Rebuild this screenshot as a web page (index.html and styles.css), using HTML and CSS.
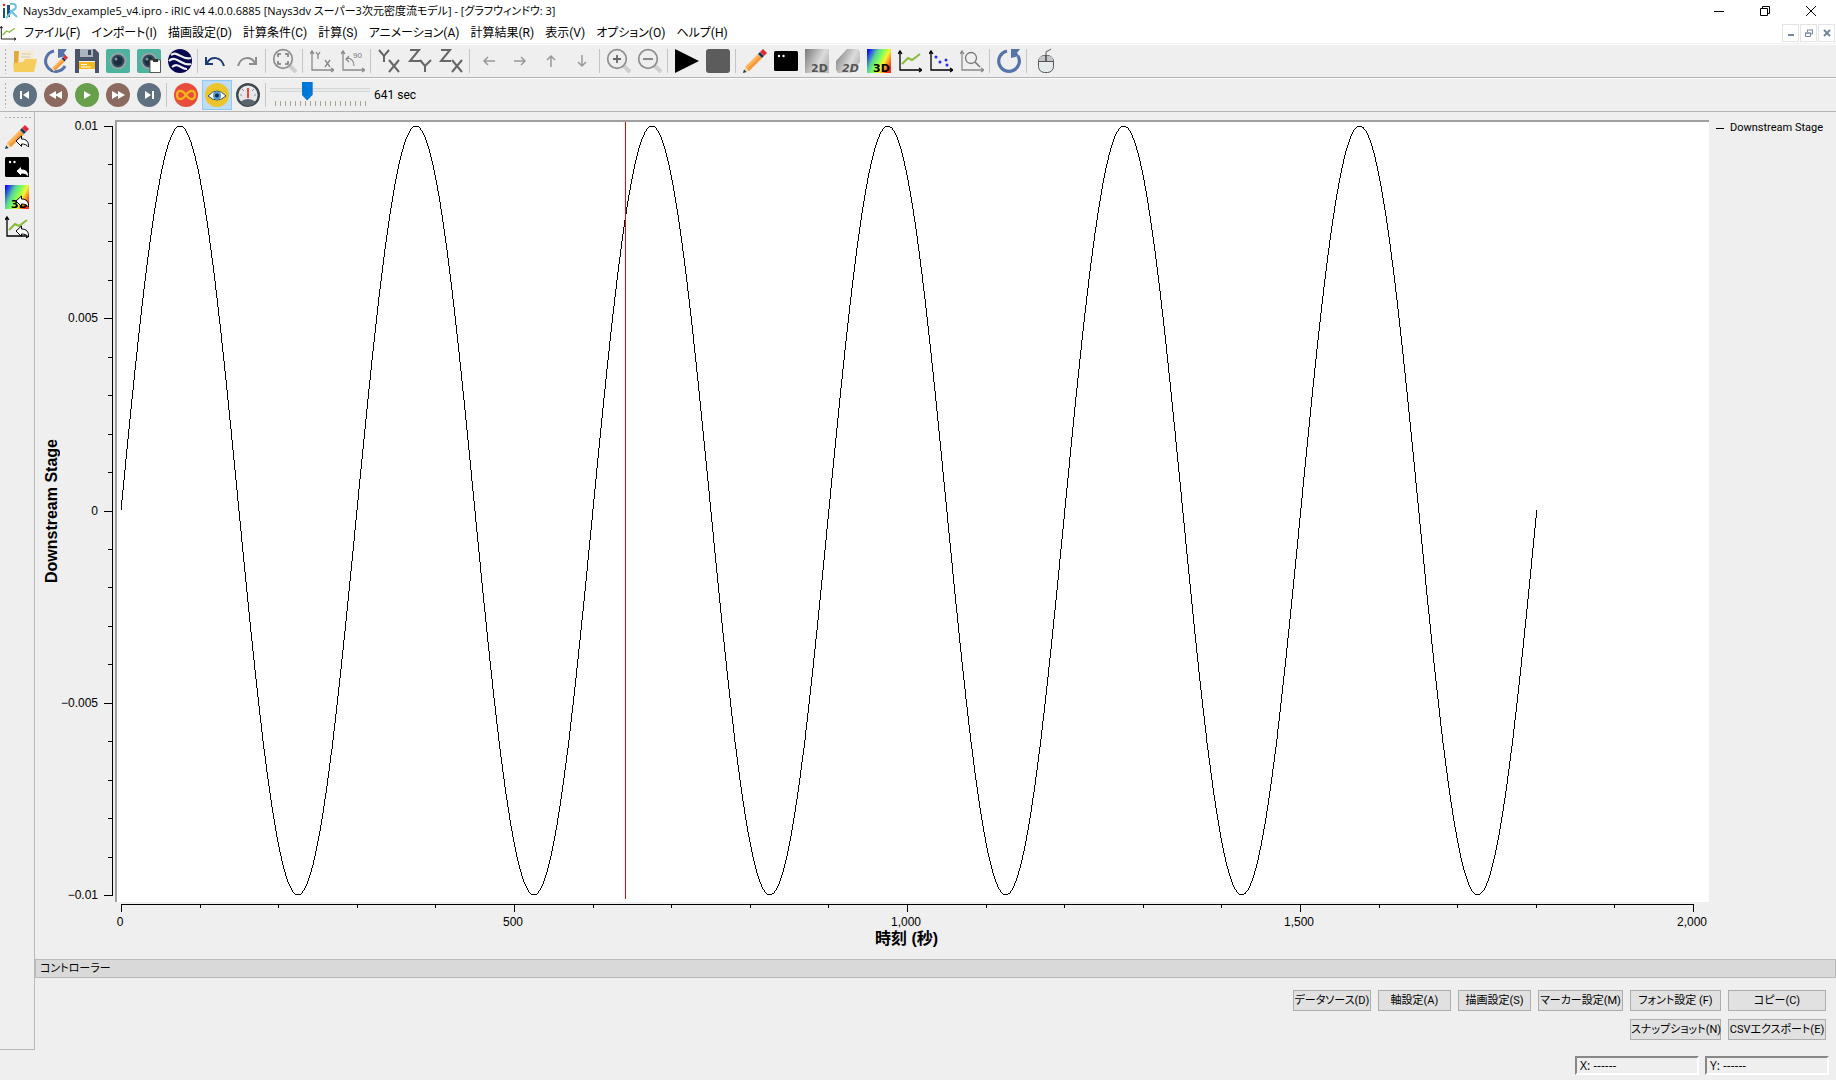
FILE: index.html
```html
<!DOCTYPE html>
<html lang="ja">
<head>
    <meta charset="UTF-8">
    <meta name="viewport" content="width=device-width, initial-scale=1.0">
    <title>Nays3dv_example5_v4.ipro - iRIC v4</title>
    <link rel="stylesheet" href="styles.css">
</head>
<body>
    <!-- shared icon shapes -->
    <svg class="icon-defs" aria-hidden="true">
        <defs>
            <linearGradient id="rainbow" x1="0" y1="0.2" x2="1" y2="0.7">
                <stop offset="0" stop-color="#1414ff"/>
                <stop offset="0.3" stop-color="#5ad29a"/>
                <stop offset="0.5" stop-color="#7dff5a"/>
                <stop offset="0.7" stop-color="#f5f532"/>
                <stop offset="1" stop-color="#ff2a14"/>
            </linearGradient>
            <linearGradient id="grays" x1="0" y1="0" x2="1" y2="0.5">
                <stop offset="0" stop-color="#777"/>
                <stop offset="0.7" stop-color="#dcdcdc"/>
                <stop offset="1" stop-color="#bbb"/>
            </linearGradient>
            <symbol id="pencil" viewBox="0 0 24 24">
                <path d="M0 24L2 18L6 22Z" fill="#f7d9a8"/>
                <path d="M0 24L1 20.500L3.500 23Z" fill="#17375e"/>
                <path d="M2 18L15 5L19 9L6 22Z" fill="#ffb55a"/>
                <path d="M4 20L17 7L19 9L6 22Z" fill="#f59a3c"/>
                <path d="M15 5L17 3L21 7L19 9Z" fill="#17375e"/>
                <path d="M17 3L20 0L24 4L21 7Z" fill="#e02b35"/>
            </symbol>
            <symbol id="terminal" viewBox="0 0 24 24">
                <rect y="2" width="24" height="20" rx="1.500"/>
                <circle cx="5" cy="7" r="1.200" fill="#fff"/>
                <circle cx="9.500" cy="7" r="1.200" fill="#fff"/>
            </symbol>
            <symbol id="axes" viewBox="0 0 24 24">
                <path d="M2 3V21H23M0 5L2 2L4 5M21 19L24 21L21 23" fill="none" stroke="currentColor" stroke-width="1.300"/>
            </symbol>
            <symbol id="line-graph" viewBox="0 0 24 24">
                <use href="#axes"/>
                <path d="M4 15L10 9L14 11L22 5" fill="none" stroke="#86bb3c" stroke-width="2"/>
            </symbol>
            <symbol id="back" viewBox="0 0 24 24">
                <path d="M11 16L16.500 11V14C21.500 14 24 17 23.500 22C21.500 19.500 19.500 19 16.500 19V21.500Z" fill="#fff" stroke="#000"/>
            </symbol>
            <symbol id="camera" viewBox="0 0 24 24">
                <rect width="24" height="24" rx="2" fill="#4db39e"/>
                <circle cx="12" cy="12" r="8.500" fill="#95a5a5"/>
                <circle cx="12" cy="12" r="6.500" fill="#324a5e"/>
                <circle cx="12" cy="12" r="4.500" fill="#1d2c3b"/>
                <circle cx="10" cy="10" r="1.500" fill="#7f93a0"/>
            </symbol>
        </defs>
    </svg>

    <header class="title-bar">
        <svg class="app-logo" viewBox="0 0 16 16"><circle cx="2" cy="2" r="1.300" fill="#c8342c"/><path d="M1 5H3V15H1ZM5 2H8V14H5Z" fill="#1d4f7c"/><path d="M8 1C15-1 16 6 9 8L15 14M4 15C8 12 8 8 14 5" fill="none" stroke="#6dc5dc" stroke-width="2"/></svg>
        <h1 class="title-text">Nays3dv_example5_v4.ipro - iRIC v4 4.0.0.6885 [Nays3dv スーパー3次元密度流モデル] - [グラフウィンドウ: 3]</h1>
        <div class="window-buttons">
            <button type="button" aria-label="最小化"><svg viewBox="0 0 10 10"><path d="M0 5.500H10"/></svg></button>
            <button type="button" aria-label="元に戻す"><svg viewBox="0 0 10 10"><path d="M0.500 2.500H7.500V9.500H0.500ZM2.500 2.500V0.500H9.500V7.500H7.500"/></svg></button>
            <button type="button" aria-label="閉じる"><svg viewBox="0 0 10 10"><path d="M0 0L10 10M10 0L0 10"/></svg></button>
        </div>
    </header>

    <nav class="menu-bar">
        <svg class="menu-icon" viewBox="0 0 24 24"><use href="#line-graph"/></svg>
        <a href="#">ファイル(F)</a>
        <a href="#">インポート(I)</a>
        <a href="#">描画設定(D)</a>
        <a href="#">計算条件(C)</a>
        <a href="#">計算(S)</a>
        <a href="#">アニメーション(A)</a>
        <a href="#">計算結果(R)</a>
        <a href="#">表示(V)</a>
        <a href="#">オプション(O)</a>
        <a href="#">ヘルプ(H)</a>
        <div class="child-buttons">
            <button type="button" aria-label="子ウィンドウを最小化"><svg viewBox="0 0 8 8"><path d="M1 6H7"/></svg></button>
            <button type="button" aria-label="子ウィンドウを元に戻す"><svg viewBox="0 0 8 8"><path d="M2 1H8M7.500 1V5H6M2.500 1V3" stroke-width="1"/><path d="M0.500 4H5.500V7.500H0.500Z" stroke-width="1"/><path d="M0 4H6" stroke-width="1"/></svg></button>
            <button type="button" aria-label="子ウィンドウを閉じる"><svg viewBox="0 0 8 8"><path d="M1 1L7 7M7 1L1 7"/></svg></button>
        </div>
    </nav>

    <div class="toolbar" role="toolbar" aria-label="メイン">
        <span class="grip"></span>
        <button type="button" aria-label="開く"><svg viewBox="0 0 24 24"><path d="M1 2H7L9 5H20V22H1Z" fill="#dfa83a"/><path d="M6 1H21V18H5Z" fill="#f4ecd8"/><path d="M9 5H18M8 8H17" stroke="#d5c9ab"/><path d="M0 14L10 13L12 10H24L21 23H1Z" fill="#f5cd5b"/></svg></button>
        <button type="button" aria-label="再読み込み"><svg viewBox="0 0 24 24"><path d="M10 2A10.300 10.300 0 1 0 21 17" fill="none" stroke="#5573a8" stroke-width="3"/><path d="M14 0H23L20 4L22 7L14 9Z" fill="#5573a8"/><use href="#pencil" x="7" y="6" width="17" height="17"/></svg></button>
        <button type="button" aria-label="保存"><svg viewBox="0 0 24 24"><path d="M0 0H20L24 4V24H0Z" fill="#4a5568"/><path d="M5 0H18V8H5Z" fill="#aab4c0"/><path d="M13 1H16V6H13Z" fill="#3c4656"/><path d="M4 12H20V24H4Z" fill="#f3f3f3"/><path d="M4 13H20V20H4Z" fill="#f3b91d"/><path d="M6 15.500H12M6 18H16" stroke="#fff"/></svg></button>
        <button type="button" aria-label="スナップショット"><svg viewBox="0 0 24 24"><use href="#camera"/></svg></button>
        <button type="button" aria-label="スナップショットをコピー"><svg viewBox="0 0 24 24"><use href="#camera"/><path d="M13 11H23.500V23.500H13Z" fill="#fff" stroke="#555"/><path d="M16 10H21V13H16Z" fill="#333"/></svg></button>
        <button type="button" aria-label="Google Earth"><svg viewBox="0 0 24 24"><circle cx="12" cy="12" r="12" fill="#050550"/><path d="M3 6C10 1 14 12 23 9M1 12C8 5 14 18 23 15M4 18C10 13 13 20 19 20" fill="none" stroke="#efefef" stroke-width="2.200"/></svg></button>
        <span class="separator"></span>
        <button type="button" aria-label="元に戻す"><svg viewBox="0 0 24 24"><path d="M1 8V15H8" fill="none" stroke="#1d3b73" stroke-width="2"/><path d="M2 14C6 7 16 7 19 17" fill="none" stroke="#1d3b73" stroke-width="2"/></svg></button>
        <button type="button" aria-label="やり直し"><svg viewBox="0 0 24 24"><path d="M20 8V15H13M19 14C15 7 5 7 2 17" fill="none" stroke="#8d8d8d" stroke-width="2"/></svg></button>
        <span class="separator"></span>
        <button type="button" aria-label="全体表示"><svg viewBox="0 0 24 24"><path d="M17 17L23 23" stroke="#cfcfcf" stroke-width="4"/><circle cx="10" cy="10" r="9.300" fill="#eee" stroke="#8f8f8f" stroke-width="1.700"/><path d="M5 8V5H8M12 5H15V8M15 12V15H12M8 15H5V12" fill="none" stroke="#777" stroke-width="1.500"/></svg></button>
        <span class="separator"></span>
        <button type="button" class="dim" aria-label="XY表示"><svg viewBox="0 0 24 24"><use href="#axes"/><path d="M6 3L8 6L10 3M8 6V10M15 11L20 18M20 11L15 18" fill="none" stroke="#888" stroke-width="1.300"/></svg></button>
        <button type="button" class="dim" aria-label="90度回転"><svg viewBox="0 0 24 24"><use href="#axes"/><path d="M5 10C10 8 13 12 13 17M8 7L5 10L8 13" fill="none" stroke="#888" stroke-width="1.200"/><text x="12" y="9" class="icon-degree">90</text></svg></button>
        <span class="separator"></span>
        <button type="button" aria-label="YX"><svg class="plane" viewBox="0 0 24 24"><path d="M1 1L6 7L11 1M6 7V13M11 11L21 23M21 11L11 23"/></svg></button>
        <button type="button" aria-label="ZY"><svg class="plane" viewBox="0 0 24 24"><path d="M1 1H10L1 12H11M11 11L16 17L22 11M16 17V23"/></svg></button>
        <button type="button" aria-label="ZX"><svg class="plane" viewBox="0 0 24 24"><path d="M1 1H10L1 12H11M12 11L22 23M22 11L12 23"/></svg></button>
        <span class="separator"></span>
        <button type="button" aria-label="左"><svg class="arrow" viewBox="0 0 24 24"><path d="M18 12H7M11 8L7 12L11 16"/></svg></button>
        <button type="button" aria-label="右"><svg class="arrow" viewBox="0 0 24 24"><path d="M6 12H17M13 8L17 12L13 16"/></svg></button>
        <button type="button" aria-label="上"><svg class="arrow" viewBox="0 0 24 24"><path d="M12 18V7M8 11L12 7L16 11"/></svg></button>
        <button type="button" aria-label="下"><svg class="arrow" viewBox="0 0 24 24"><path d="M12 6V17M8 13L12 17L16 13"/></svg></button>
        <span class="separator"></span>
        <button type="button" aria-label="拡大"><svg viewBox="0 0 24 24"><path d="M17 17L23 23" stroke="#cfcfcf" stroke-width="4"/><circle cx="10" cy="10" r="9.300" fill="#eee" stroke="#8f8f8f" stroke-width="1.700"/><path d="M6 10H14M10 6V14" stroke="#666" stroke-width="1.800"/></svg></button>
        <button type="button" aria-label="縮小"><svg viewBox="0 0 24 24"><path d="M17 17L23 23" stroke="#cfcfcf" stroke-width="4"/><circle cx="10" cy="10" r="9.300" fill="#eee" stroke="#8f8f8f" stroke-width="1.700"/><path d="M5 10H15" stroke="#777" stroke-width="1.700"/></svg></button>
        <span class="separator"></span>
        <button type="button" aria-label="計算実行"><svg viewBox="0 0 24 24"><path d="M0 0L24 12L0 24Z"/></svg></button>
        <button type="button" aria-label="計算停止"><svg viewBox="0 0 24 24"><rect width="24" height="24" rx="3" fill="#5c5c5c"/></svg></button>
        <span class="separator"></span>
        <button type="button" aria-label="プリプロセッサー"><svg viewBox="0 0 24 24"><use href="#pencil"/></svg></button>
        <button type="button" aria-label="コンソール"><svg viewBox="0 0 24 24"><use href="#terminal"/></svg></button>
        <button type="button" aria-label="2D 可視化"><svg viewBox="0 0 24 24"><path d="M0 0H24V24H0Z" fill="url(#grays)"/><text x="6" y="23" class="icon-label gray">2D</text></svg></button>
        <button type="button" aria-label="2D 鳥瞰図"><svg viewBox="0 0 24 24"><path d="M0 12L11 0H22L24 3V13L15 24H2L0 21Z" fill="url(#grays)"/><text x="6" y="23" class="icon-label gray slanted">2D</text></svg></button>
        <button type="button" aria-label="3D 可視化"><svg viewBox="0 0 24 24"><path d="M0 0H24V24H0Z" fill="url(#rainbow)"/><text x="6" y="23" class="icon-label">3D</text></svg></button>
        <button type="button" aria-label="グラフ"><svg viewBox="0 0 24 24"><use href="#line-graph"/></svg></button>
        <button type="button" aria-label="散布図"><svg viewBox="0 0 24 24"><use href="#axes"/><g fill="#2a2af0"><circle cx="7" cy="8" r="1.500"/><circle cx="11" cy="13" r="1.500"/><circle cx="17" cy="11" r="1.500"/><circle cx="18" cy="16" r="1.500"/></g></svg></button>
        <button type="button" class="dim" aria-label="検証"><svg viewBox="0 0 24 24"><use href="#axes"/><circle cx="11" cy="9" r="5.500" fill="none" stroke="#777" stroke-width="1.300"/><path d="M15 13L20 18" stroke="#777" stroke-width="1.600"/></svg></button>
        <span class="separator"></span>
        <button type="button" aria-label="更新"><svg viewBox="0 0 24 24"><path d="M10 2A10.300 10.300 0 1 0 21 7" fill="none" stroke="#5573a8" stroke-width="3.200"/><path d="M14 0H23L20 4L22 7L14 9Z" fill="#5573a8"/></svg></button>
        <span class="separator"></span>
        <button type="button" aria-label="マウスヒント"><svg viewBox="0 0 24 24"><rect x="4.500" y="6.500" width="15" height="17" rx="6" fill="#e6ecee" stroke="#555"/><path d="M5 12V11Q5 7 10 7H14Q19 7 19 11V12Z" fill="#c2c6c8"/><path d="M4.500 12.500H19.500M12 7V12M12 6V3Q12 2 14 2L17 0" fill="none" stroke="#555"/><path d="M11 7H13V12H11Z" fill="#666"/></svg></button>
    </div>

    <div class="toolbar" role="toolbar" aria-label="アニメーション">
        <span class="grip"></span>
        <button type="button" aria-label="最初へ"><svg viewBox="0 0 24 24"><circle cx="12" cy="12" r="12" fill="#5f7180"/><path d="M7 8H9V16H7ZM16 8V16L10 12Z" fill="#fff"/></svg></button>
        <button type="button" aria-label="戻る"><svg viewBox="0 0 24 24"><circle cx="12" cy="12" r="12" fill="#8d6a5f"/><path d="M12 8V16L5 12ZM18 8V16L11 12Z" fill="#fff"/></svg></button>
        <button type="button" aria-label="再生"><svg viewBox="0 0 24 24"><circle cx="12" cy="12" r="12" fill="#689f4b"/><path d="M9 8V16L16 12Z" fill="#fff"/></svg></button>
        <button type="button" aria-label="進む"><svg viewBox="0 0 24 24"><circle cx="12" cy="12" r="12" fill="#8d6a5f"/><path d="M6 8V16L13 12ZM12 8V16L19 12Z" fill="#fff"/></svg></button>
        <button type="button" aria-label="最後へ"><svg viewBox="0 0 24 24"><circle cx="12" cy="12" r="12" fill="#5f7180"/><path d="M15 8H17V16H15ZM8 8V16L14 12Z" fill="#fff"/></svg></button>
        <span class="separator"></span>
        <button type="button" aria-label="繰り返し"><svg viewBox="0 0 24 24"><circle cx="12" cy="12" r="12" fill="#e84c3d"/><path d="M12 12C8 6 3 7 3 12S8 18 12 12S21 7 21 12S16 18 12 12Z" fill="none" stroke="#f6b51a" stroke-width="2.200"/></svg></button>
        <button type="button" class="checked" aria-label="追従" aria-pressed="true"><svg viewBox="0 0 24 24"><circle cx="12" cy="12" r="12" fill="#ecc42c"/><path d="M3 13Q12 3 21 13Q12 21 3 13Z" fill="#fff" stroke="#324a5e"/><circle cx="12" cy="12.500" r="4" fill="#4a9bd0"/><circle cx="12" cy="12.500" r="2" fill="#13283a"/></svg></button>
        <button type="button" aria-label="速度"><svg viewBox="0 0 24 24"><circle cx="12" cy="12" r="10.800" fill="#e8e8e8" stroke="#3f474f" stroke-width="2.400"/><path d="M4 19Q12 13 20 19Q12 27 4 19Z" fill="#59636b"/><path d="M4 12H6M18 12H20M6 6L8 8M18 6L16 8" stroke="#8a949b"/><path d="M11 5H13V15H11Z" fill="#e04a3f"/></svg></button>
        <span class="separator"></span>
        <div class="time-slider">
            <input type="range" id="timeStep" min="0" max="1800" value="641" aria-label="タイムステップ">
        </div>
        <label class="time-label" for="timeStep">641 sec</label>
    </div>

    <main class="workspace">
        <aside class="side-bar">
            <span class="side-grip"></span>
            <button type="button" aria-label="プリプロセッサーへ戻る"><svg viewBox="0 0 24 24"><use href="#pencil"/><use href="#back"/></svg></button>
            <button type="button" aria-label="コンソールへ戻る"><svg viewBox="0 0 24 24"><use href="#terminal"/><use href="#back"/></svg></button>
            <button type="button" aria-label="3D へ戻る"><svg viewBox="0 0 24 24"><path d="M0 0H24V24H0Z" fill="url(#rainbow)"/><text x="6" y="23" class="icon-label">3D</text><use href="#back"/></svg></button>
            <button type="button" aria-label="グラフへ戻る"><svg viewBox="0 0 24 24"><use href="#line-graph"/><use href="#back"/></svg></button>
        </aside>

        <div class="graph-window">
            <section class="graph">
                <div class="y-title">Downstream Stage</div>
                <div class="y-labels">
                    <span>0.01</span>
                    <span>0.005</span>
                    <span>0</span>
                    <span>−0.005</span>
                    <span>−0.01</span>
                </div>
                <svg class="y-axis" id="yAxis"></svg>
                <div class="canvas">
                    <svg id="plot" viewBox="0 0 2000 200" preserveAspectRatio="none"></svg>
                </div>
                <div class="legend"><span class="legend-line"></span>Downstream Stage</div>
                <svg class="x-axis" id="xAxis"></svg>
                <div class="x-labels">
                    <span>0</span>
                    <span>500</span>
                    <span>1,000</span>
                    <span>1,500</span>
                    <span>2,000</span>
                </div>
                <div class="x-title">時刻 (秒)</div>
            </section>

            <section class="controller">
                <h2 class="controller-title">コントローラー</h2>
                <div class="controller-buttons">
                    <button type="button">データソース(D)</button>
                    <button type="button">軸設定(A)</button>
                    <button type="button">描画設定(S)</button>
                    <button type="button">マーカー設定(M)</button>
                    <button type="button">フォント設定 (F)</button>
                    <button type="button">コピー(C)</button>
                    <button type="button" class="snapshot">スナップショット(N)</button>
                    <button type="button">CSVエクスポート(E)</button>
                </div>
            </section>
        </div>
    </main>

    <footer class="status-bar">
        <span class="status-field">X: ------</span>
        <span class="status-field">Y: ------</span>
    </footer>

    <script src="graph.js"></script>
</body>
</html>
```
FILE: styles.css
```css
* {
    margin: 0;
    padding: 0;
    box-sizing: border-box;
}

body {
    display: flex;
    flex-direction: column;
    min-height: 100vh;
    background: #efefef;
    color: #000;
    font-family: Roboto, "Noto Sans CJK JP", sans-serif;
    font-feature-settings: "palt";
    font-size: 12px;
    line-height: 16px;
}

button {
    border: 0;
    background: none;
    font: inherit;
    color: inherit;
}

svg {
    display: block;
}

.icon-defs {
    position: absolute;
    width: 0;
    height: 0;
}

/* title bar */
.title-bar {
    display: flex;
    align-items: center;
    height: 22px;
    padding-left: 2px;
    background: #fff;
}

.app-logo {
    width: 16px;
    height: 16px;
    margin-right: 5px;
}

.title-text {
    font-family: "Open Sans", "Noto Sans CJK JP", sans-serif;
    font-size: 11px;
    font-weight: 400;
}

.window-buttons {
    display: flex;
    margin-left: auto;
    padding-right: 2px;
}

.window-buttons button {
    display: flex;
    justify-content: center;
    width: 46px;
}

.window-buttons svg {
    width: 10px;
    height: 10px;
    fill: none;
    stroke: #000;
}

/* menu bar */
.menu-bar {
    display: flex;
    align-items: center;
    gap: 11px;
    height: 22px;
    border-bottom: 1px solid #f0f0f0;
    background: #fff;
}

.menu-bar a {
    color: #000;
    text-decoration: none;
    white-space: nowrap;
}

.menu-icon {
    width: 16px;
    height: 16px;
    margin-right: -3px;
}

.child-buttons {
    display: flex;
    gap: 1px;
    margin-left: auto;
    padding-right: 1px;
}

.child-buttons button {
    display: grid;
    place-items: center;
    width: 17px;
    height: 18px;
    border: 1px solid #e3e3e3;
}

.child-buttons svg {
    width: 8px;
    height: 8px;
    fill: none;
    stroke: #74869a;
    stroke-width: 2;
}

/* toolbars */
.toolbar {
    display: flex;
    align-items: center;
    gap: 1px;
    height: 34px;
    padding-left: 4px;
    border-top: 1px solid #fcfcfc;
    border-bottom: 1px solid #b4b4b4;
}

.grip {
    width: 5px;
    height: 26px;
    background: radial-gradient(#b0b0b0 1px, transparent 1px) 0 0 / 3px 4px repeat-y;
}

.toolbar button,
.side-bar button {
    display: grid;
    place-items: center;
    width: 30px;
    height: 30px;
}

.toolbar button svg,
.side-bar button svg {
    width: 24px;
    height: 24px;
    overflow: visible;
}

.toolbar .checked {
    border: 1px solid #90c8f6;
    background: #c0dcf3;
}

.dim {
    color: #8a8a8a;
}

.plane {
    fill: none;
    stroke: #666;
    stroke-width: 2;
}

.arrow {
    fill: none;
    stroke: #999;
    stroke-width: 1.5;
}

.icon-label {
    font-family: "DejaVu Sans", sans-serif;
    font-size: 11px;
    font-weight: 700;
}

.icon-label.gray {
    fill: #555;
}

.icon-label.slanted {
    font-style: oblique;
}

.icon-degree {
    font-family: "Liberation Sans", sans-serif;
    font-size: 8px;
    fill: #777;
}

.separator {
    width: 5px;
    height: 24px;
    background: linear-gradient(#c5c5c5, #c5c5c5) 1px 0 / 1px 100% no-repeat;
}

.time-slider {
    width: 100px;
    height: 28px;
    background: repeating-linear-gradient(90deg, #a8a294 0 1px, transparent 1px 5px) 5px 20px / 91px 5px no-repeat;
}

.time-slider input {
    display: block;
    width: 100%;
    height: 20px;
    appearance: none;
    background: linear-gradient(#d6d6d6 0 1px, #e7eaea 1px 3px, #d6d6d6 3px) 0 7px / 100% 4px no-repeat;
}

.time-slider input::-webkit-slider-thumb {
    appearance: none;
    width: 11px;
    height: 19px;
    background: #0078d7;
    clip-path: polygon(0 0, 100% 0, 100% 70%, 50% 100%, 0 70%);
}

.time-label {
    margin-left: 3px;
}

/* workspace */
.workspace {
    display: flex;
    flex: 1;
}

.side-bar {
    display: flex;
    flex-direction: column;
    align-items: center;
    width: 35px;
    padding-top: 4px;
    border-right: 1px solid #b9b9b9;
    border-bottom: 1px solid #b9b9b9;
}

.side-grip {
    width: 27px;
    height: 4px;
    margin-bottom: 2px;
    background: radial-gradient(#b0b0b0 1px, transparent 1px) 0 0 / 4px 3px repeat-x;
}

.graph-window {
    display: flex;
    flex: 1;
    flex-direction: column;
}

/* graph */
.graph {
    display: grid;
    flex: 1;
    grid-template-columns: 34px 34px 12px 1fr 127px;
    grid-template-rows: 1fr 10px 20px 14px;
    padding-top: 8px;
    padding-bottom: 13px;
    font-family: "Liberation Sans", "Noto Sans CJK JP", sans-serif;
}

.y-title {
    place-self: center;
    writing-mode: vertical-rl;
    transform: rotate(180deg);
    font-size: 16px;
    font-weight: 700;
}

.y-labels {
    display: flex;
    flex-direction: column;
    justify-content: space-between;
    padding: 6px 5px 7px 0;
}

.y-labels span {
    display: flex;
    align-items: center;
    justify-content: flex-end;
    height: 0;
}

.y-axis,
.x-axis {
    width: 100%;
    height: 100%;
    stroke: #000;
    shape-rendering: crispEdges;
}

.canvas {
    min-height: 0;
    padding: 4px 15px 7px 4px;
    border-top: 2px solid #a0a0a0;
    border-left: 2px solid #a0a0a0;
    background: #fff;
}

.canvas svg {
    width: 100%;
    height: 100%;
    overflow: visible;
}

.curve,
.time-line {
    fill: none;
    stroke: #000;
    vector-effect: non-scaling-stroke;
    shape-rendering: crispEdges;
}

.time-line {
    stroke: #f00;
}

.legend {
    display: flex;
    align-items: center;
    align-self: start;
    gap: 6px;
    padding-left: 7px;
    font-family: Roboto, sans-serif;
    font-size: 11px;
    white-space: nowrap;
}

.legend-line {
    width: 8px;
    height: 1px;
    background: #000;
}

.x-axis {
    grid-column: 4;
}

.x-labels {
    display: flex;
    grid-column: 4;
    justify-content: space-between;
    align-items: center;
    padding: 0 17px 0 5px;
}

.x-labels span {
    display: flex;
    justify-content: center;
    width: 0;
}

.x-title {
    grid-column: 4;
    justify-self: center;
    padding-right: 11px;
    font-size: 16px;
    font-weight: 700;
    line-height: 14px;
}

/* controller */
.controller-title {
    height: 19px;
    padding: 0 4px;
    border: 1px solid #b9b9b9;
    background: #d9d9d9;
    font-size: 11px;
    font-weight: 400;
    line-height: 17px;
}

.controller-buttons {
    display: grid;
    grid-template-columns: 78px 73px 73px 85px 91px 98px;
    justify-content: end;
    gap: 8px 7px;
    padding: 12px 10px 10px;
}

.controller-buttons button {
    height: 21px;
    border: 1px solid #adadad;
    background: #e1e1e1;
    font-size: 11px;
    line-height: 17px;
    white-space: nowrap;
}

.controller-buttons .snapshot {
    grid-column: 5;
}

/* status bar */
.status-bar {
    display: flex;
    justify-content: flex-end;
    gap: 6px;
    height: 30px;
    padding: 6px 7px 5px 0;
}

.status-field {
    width: 124px;
    padding-left: 3px;
    border: 2px solid;
    border-color: #888 #fff #fff #888;
    font-family: "Open Sans", sans-serif;
    line-height: 15px;
}
```
FILE: graph.js
```js
const SVG_NS = 'http://www.w3.org/2000/svg';

const TIME_MAX = 2000;
const TIME_END = 1800;
const PERIOD = 300;

function addPath(parent, d, className) {
    const path = document.createElementNS(SVG_NS, 'path');
    path.setAttribute('d', d);
    if (className) {
        path.setAttribute('class', className);
    }
    parent.appendChild(path);
}

function drawPlot() {
    const plot = document.getElementById('plot');
    const time = Number(document.getElementById('timeStep').value);
    let d = 'M0 100';
    for (let t = 2; t <= TIME_END; t += 2) {
        d += `L${t} ${(100 - 100 * Math.sin(2 * Math.PI * t / PERIOD)).toFixed(2)}`;
    }
    plot.replaceChildren();
    addPath(plot, d, 'curve');
    addPath(plot, `M${time} -1V201`, 'time-line');
}

function drawAxes() {
    const xAxis = document.getElementById('xAxis');
    const yAxis = document.getElementById('yAxis');

    // the axes line up with the inner edges of the canvas
    const left = 6;
    const width = xAxis.clientWidth - left - 16;
    let d = `M${left} 2.5H${left + width}`;
    for (let t = 0; t <= TIME_MAX; t += 100) {
        d += `M${Math.round(left + width * t / TIME_MAX) + 0.5} 2V${t % 500 ? 6 : 10}`;
    }
    xAxis.replaceChildren();
    addPath(xAxis, d);

    const top = 6;
    const height = yAxis.clientHeight - top - 7;
    d = `M9.5 ${top}V${top + height}`;
    for (let i = 0; i <= 20; i++) {
        d += `M${i % 5 ? 5 : 1} ${Math.round(top + height * i / 20) + 0.5}H10`;
    }
    yAxis.replaceChildren();
    addPath(yAxis, d);
}

function draw() {
    drawPlot();
    drawAxes();
}

document.getElementById('timeStep').addEventListener('input', drawPlot);
window.addEventListener('resize', draw);
draw();
```
